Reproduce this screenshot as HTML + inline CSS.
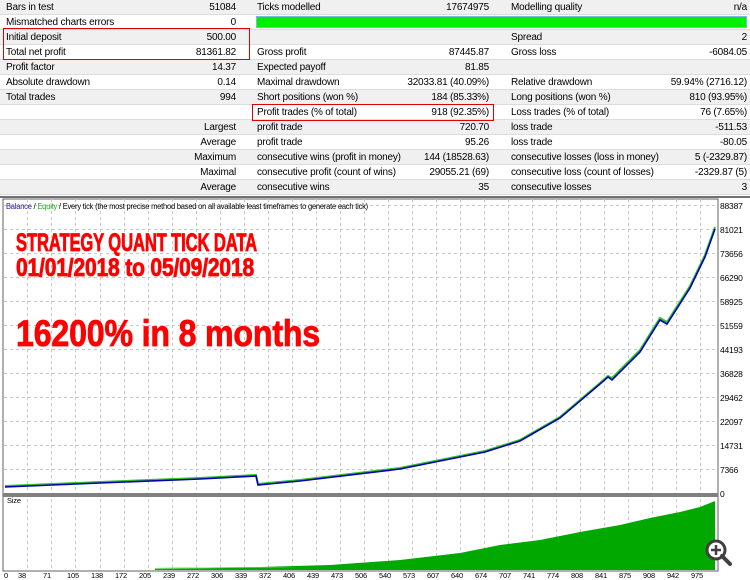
<!DOCTYPE html>
<html><head><meta charset="utf-8"><style>
body{margin:0;width:750px;height:580px;overflow:hidden;background:#fff;font-family:"Liberation Sans",sans-serif;font-size:10px;letter-spacing:-0.2px;color:#000;position:relative}
.r{position:absolute;left:0;width:750px;height:15px;border-bottom:1px solid #dcdcdc;box-sizing:border-box}
.g{background:#f0f0f0}
.t{position:absolute;top:1px;white-space:nowrap;line-height:13px}
.rt{text-align:right}
</style></head><body>
<div class="r g" style="top:0"><span class="t" style="left:6px">Bars in test</span><span class="t rt" style="right:514px">51084</span><span class="t" style="left:257px">Ticks modelled</span><span class="t rt" style="right:261px">17674975</span><span class="t" style="left:511px">Modelling quality</span><span class="t rt" style="right:3px">n/a</span></div>
<div class="r" style="top:15px"><span class="t" style="left:6px">Mismatched charts errors</span><span class="t rt" style="right:514px">0</span></div>
<div style="position:absolute;left:256px;top:16px;width:491px;height:12px;background:#00f000;border:1px solid #7ab8e0;box-sizing:border-box"></div>
<div class="r g" style="top:30px"><span class="t" style="left:6px">Initial deposit</span><span class="t rt" style="right:514px">500.00</span><span class="t" style="left:511px">Spread</span><span class="t rt" style="right:3px">2</span></div>
<div class="r" style="top:45px"><span class="t" style="left:6px">Total net profit</span><span class="t rt" style="right:514px">81361.82</span><span class="t" style="left:257px">Gross profit</span><span class="t rt" style="right:261px">87445.87</span><span class="t" style="left:511px">Gross loss</span><span class="t rt" style="right:3px">-6084.05</span></div>
<div class="r g" style="top:60px"><span class="t" style="left:6px">Profit factor</span><span class="t rt" style="right:514px">14.37</span><span class="t" style="left:257px">Expected payoff</span><span class="t rt" style="right:261px">81.85</span></div>
<div class="r" style="top:75px"><span class="t" style="left:6px">Absolute drawdown</span><span class="t rt" style="right:514px">0.14</span><span class="t" style="left:257px">Maximal drawdown</span><span class="t rt" style="right:261px">32033.81 (40.09%)</span><span class="t" style="left:511px">Relative drawdown</span><span class="t rt" style="right:3px">59.94% (2716.12)</span></div>
<div class="r g" style="top:90px"><span class="t" style="left:6px">Total trades</span><span class="t rt" style="right:514px">994</span><span class="t" style="left:257px">Short positions (won %)</span><span class="t rt" style="right:261px">184 (85.33%)</span><span class="t" style="left:511px">Long positions (won %)</span><span class="t rt" style="right:3px">810 (93.95%)</span></div>
<div class="r" style="top:105px"><span class="t" style="left:257px">Profit trades (% of total)</span><span class="t rt" style="right:261px">918 (92.35%)</span><span class="t" style="left:511px">Loss trades (% of total)</span><span class="t rt" style="right:3px">76 (7.65%)</span></div>
<div class="r g" style="top:120px"><span class="t rt" style="right:514px">Largest</span><span class="t" style="left:257px">profit trade</span><span class="t rt" style="right:261px">720.70</span><span class="t" style="left:511px">loss trade</span><span class="t rt" style="right:3px">-511.53</span></div>
<div class="r" style="top:135px"><span class="t rt" style="right:514px">Average</span><span class="t" style="left:257px">profit trade</span><span class="t rt" style="right:261px">95.26</span><span class="t" style="left:511px">loss trade</span><span class="t rt" style="right:3px">-80.05</span></div>
<div class="r g" style="top:150px"><span class="t rt" style="right:514px">Maximum</span><span class="t" style="left:257px">consecutive wins (profit in money)</span><span class="t rt" style="right:261px">144 (18528.63)</span><span class="t" style="left:511px">consecutive losses (loss in money)</span><span class="t rt" style="right:3px">5 (-2329.87)</span></div>
<div class="r" style="top:165px"><span class="t rt" style="right:514px">Maximal</span><span class="t" style="left:257px">consecutive profit (count of wins)</span><span class="t rt" style="right:261px">29055.21 (69)</span><span class="t" style="left:511px">consecutive loss (count of losses)</span><span class="t rt" style="right:3px">-2329.87 (5)</span></div>
<div class="r g" style="top:180px"><span class="t rt" style="right:514px">Average</span><span class="t" style="left:257px">consecutive wins</span><span class="t rt" style="right:261px">35</span><span class="t" style="left:511px">consecutive losses</span><span class="t rt" style="right:3px">3</span></div>
<div style="position:absolute;left:3px;top:28px;width:247px;height:32px;border:1px solid #e00000;box-sizing:border-box"></div>
<div style="position:absolute;left:252px;top:104px;width:242px;height:17px;border:1px solid #e00000;box-sizing:border-box"></div>
<div style="position:absolute;left:0;top:196px;width:750px;height:2px;background:#707070"></div>
<svg style="position:absolute;left:0;top:198px" width="750" height="382" viewBox="0 198 750 382">
<rect x="3" y="199" width="715" height="372" fill="#fff" stroke="#606060"/>
<g stroke="#c8c8c8" stroke-dasharray="3,3" stroke-width="1">
<path d="M4 205.5H717M4 229.5H717M4 253.5H717M4 277.5H717M4 301.5H717M4 325.5H717M4 349.5H717M4 373.5H717M4 397.5H717M4 421.5H717M4 445.5H717M4 469.5H717"/>
<path d="M27.5 199V570M51.5 199V570M75.5 199V570M100.5 199V570M124.5 199V570M148.5 199V570M172.5 199V570M196.5 199V570M220.5 199V570M244.5 199V570M268.5 199V570M292.5 199V570M316.5 199V570M340.5 199V570M364.5 199V570M388.5 199V570M412.5 199V570M436.5 199V570M460.5 199V570M484.5 199V570M508.5 199V570M532.5 199V570M556.5 199V570M580.5 199V570M604.5 199V570M628.5 199V570M652.5 199V570M676.5 199V570M700.5 199V570"/>
</g>
<rect x="3" y="493" width="715" height="4" fill="#808080"/>
<polyline fill="none" stroke="#30c030" stroke-width="2" points="5,486 100,482 200,478 256,475 258,484 300,480 400,468 485,451 520,440 560,417 600,383 608,376 612,378 640,350 660,318 667,322 690,286 705,255 715,227"/>
<polyline fill="none" stroke="#0000b0" stroke-width="1.6" points="5,487 100,483 200,479 256,476 258,485 300,481 400,469 485,452 520,441 560,418 600,384 608,377 612,380 640,352 660,320 667,324 690,288 705,257 715,229"/>
<polygon fill="#00a800" points="155,570 155,568 260,567 330,565 400,560 460,553 500,545 540,540 580,532 620,525 650,518 680,512 700,507 715,501 715,570"/>
<polygon fill="#80e080" points="155,568 260,567 300,567 155,569"/>
<g font-family="Liberation Sans,sans-serif" font-size="8.5" fill="#000" letter-spacing="-0.2">
<text x="720" y="209">88387</text><text x="720" y="233">81021</text><text x="720" y="257">73656</text><text x="720" y="281">66290</text><text x="720" y="305">58925</text><text x="720" y="329">51559</text><text x="720" y="353">44193</text><text x="720" y="377">36828</text><text x="720" y="401">29462</text><text x="720" y="425">22097</text><text x="720" y="449">14731</text><text x="720" y="473">7366</text><text x="720" y="497">0</text>
<text x="7" y="503" font-size="7.5">Size</text>
<text x="6" y="209" font-size="8" textLength="362" lengthAdjust="spacingAndGlyphs"><tspan fill="#2020a0">Balance</tspan> / <tspan fill="#20b020">Equity</tspan> / Every tick (the most precise method based on all available least timeframes to generate each tick)</text>
</g>
<g font-family="Liberation Sans,sans-serif" font-size="7.5" fill="#000">
<text x="4" y="578">0</text><text x="18" y="578">38</text><text x="43" y="578">71</text><text x="67" y="578">105</text><text x="91" y="578">138</text><text x="115" y="578">172</text><text x="139" y="578">205</text><text x="163" y="578">239</text><text x="187" y="578">272</text><text x="211" y="578">306</text><text x="235" y="578">339</text><text x="259" y="578">372</text><text x="283" y="578">406</text><text x="307" y="578">439</text><text x="331" y="578">473</text><text x="355" y="578">506</text><text x="379" y="578">540</text><text x="403" y="578">573</text><text x="427" y="578">607</text><text x="451" y="578">640</text><text x="475" y="578">674</text><text x="499" y="578">707</text><text x="523" y="578">741</text><text x="547" y="578">774</text><text x="571" y="578">808</text><text x="595" y="578">841</text><text x="619" y="578">875</text><text x="643" y="578">908</text><text x="667" y="578">942</text><text x="691" y="578">975</text>
</g>
<g font-family="Liberation Sans,sans-serif" font-weight="bold" fill="#ff0000" stroke="#ff0000" stroke-width="0.8">
<text x="16" y="251" font-size="25" textLength="241" lengthAdjust="spacingAndGlyphs">STRATEGY QUANT TICK DATA</text>
<text x="16" y="276" font-size="25" textLength="238" lengthAdjust="spacingAndGlyphs">01/01/2018 to 05/09/2018</text>
<text x="16" y="346" font-size="37" textLength="304" lengthAdjust="spacingAndGlyphs">16200% in 8 months</text>
</g>
<circle cx="716" cy="550" r="9" fill="#fff" stroke="#404040" stroke-width="3"/>
<path d="M711 550H721M716 545V555" stroke="#404040" stroke-width="2.5"/>
<path d="M722 556L730 564" stroke="#404040" stroke-width="4" stroke-linecap="round"/>
</svg>
</body></html>
